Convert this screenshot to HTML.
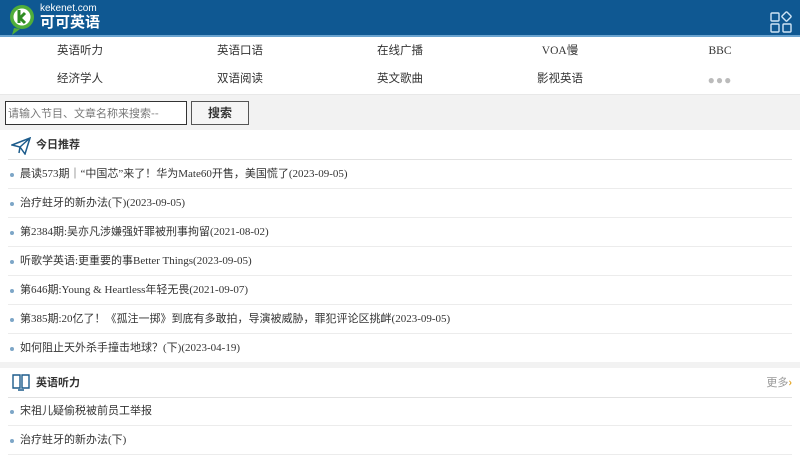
<!DOCTYPE html>
<html><head><meta charset="utf-8"><style>
*{margin:0;padding:0;box-sizing:border-box}
body{width:800px;height:450px;overflow:hidden;background:#fff;font-family:"Liberation Serif","Noto Sans CJK SC",serif;font-size:12px;color:#333}
.hd{height:37px;background:#0f5892;border-bottom:2px solid #6aa3cf;position:relative}
.nav{height:57px;position:relative}
.nav div{position:absolute;width:160px;text-align:center;font-size:11.5px;color:#333;line-height:16px;height:16px}
.sb{height:36px;background:#f2f2f2;position:relative;border-top:1px solid #e8e8e8}
.inp{position:absolute;left:5px;top:6px;width:182px;height:24px;border:1px solid #333;background:#fff;font-family:"Noto Sans CJK SC",sans-serif;font-size:11px;color:#777;padding:4px 2px;line-height:14px}
.btn{position:absolute;left:191px;top:6px;width:58px;height:24px;border:1px solid #555;background:#f5f5f5;text-align:center;font-family:"Noto Sans CJK SC",sans-serif;font-weight:bold;font-size:12px;line-height:21px}
.sec{position:absolute;left:0;width:800px;background:#fff}
.st{position:absolute;left:8px;right:8px;height:30px;border-bottom:1px solid #e2e2e2}
.st b{position:absolute;left:28px;top:6px;font-family:"Noto Sans CJK SC",sans-serif;font-size:11px}
.it{position:absolute;left:8px;right:8px;height:29px;border-bottom:1px solid #ececec;font-size:11px;line-height:29px;padding-left:12px;font-family:"Liberation Serif","Noto Sans CJK SC",serif}
.it:before{content:"";position:absolute;left:2px;top:13px;width:4px;height:4px;border-radius:2px;background:#7da6c7}
</style></head><body>
<div class="hd">
<svg width="30" height="32" style="position:absolute;left:8px;top:4px" viewBox="0 0 30 32"><circle cx="14" cy="13" r="12" fill="#4fae3a"/><path d="M6 24 L4 31 L12 25Z" fill="#4fae3a"/><circle cx="14" cy="13" r="8.5" fill="#fff"/><path d="M11 6v13M17 9l-5 5 5 5" stroke="#2e8c22" stroke-width="3" fill="none"/></svg>
<div style="position:absolute;left:40px;top:3px;color:#fff;font-family:'Liberation Sans',sans-serif;font-size:10px;line-height:11px">kekenet.com</div>
<div style="position:absolute;left:40px;top:13px;color:#fff;font-family:'Noto Sans CJK SC',sans-serif;font-weight:bold;font-size:15px;line-height:18px">可可英语</div>
<svg width="24" height="22" style="position:absolute;left:770px;top:11px" viewBox="0 0 24 22" fill="none" stroke="#cfe4f5" stroke-width="1.4"><rect x="1" y="2" width="8" height="8" rx="1"/><rect x="13" y="2" width="7" height="7" rx="1" transform="rotate(45 16.5 5.5)"/><rect x="1" y="13" width="8" height="8" rx="1"/><rect x="13" y="13" width="8" height="8" rx="1"/></svg>
</div>
<div class="nav">
<div style="left:0;top:6px">英语听力</div><div style="left:160px;top:6px">英语口语</div><div style="left:320px;top:6px">在线广播</div><div style="left:480px;top:6px">VOA慢</div><div style="left:640px;top:6px">BBC</div>
<div style="left:0;top:34px">经济学人</div><div style="left:160px;top:34px">双语阅读</div><div style="left:320px;top:34px">英文歌曲</div><div style="left:480px;top:34px">影视英语</div><div style="left:640px;top:35px;color:#bbb;font-size:12px;letter-spacing:1px">●●●</div>
</div>
<div class="sb"><div class="inp">请输入节目、文章名称来搜索--</div><div class="btn">搜索</div></div>
<div class="sec" style="top:130px;height:232px">
<div class="st" style="top:0">
<svg width="20" height="18" style="position:absolute;left:3px;top:7px" viewBox="0 0 20 18" fill="none" stroke="#1d5c8c" stroke-width="1.5"><path d="M1 8 L19 1 L14 17 L9 10 Z M9 10 L19 1 M9 10 L8 16"/></svg>
<b>今日推荐</b></div>
<div class="it" style="top:30px">晨读573期｜“中国芯”来了！华为Mate60开售，美国慌了(2023-09-05)</div>
<div class="it" style="top:59px">治疗蛀牙的新办法(下)(2023-09-05)</div>
<div class="it" style="top:88px">第2384期:吴亦凡涉嫌强奸罪被刑事拘留(2021-08-02)</div>
<div class="it" style="top:117px">听歌学英语:更重要的事Better Things(2023-09-05)</div>
<div class="it" style="top:146px">第646期:Young &amp; Heartless年轻无畏(2021-09-07)</div>
<div class="it" style="top:175px">第385期:20亿了！《孤注一掷》到底有多敢拍，导演被威胁，罪犯评论区挑衅(2023-09-05)</div>
<div class="it" style="top:204px;border:none">如何阻止天外杀手撞击地球？(下)(2023-04-19)</div>
</div>
<div style="position:absolute;top:362px;left:0;width:800px;height:8px;background:#f2f2f2"></div>
<div class="sec" style="top:368px;height:82px">
<div class="st" style="top:0">
<svg width="18" height="18" style="position:absolute;left:4px;top:5px" viewBox="0 0 18 18" fill="none" stroke="#1d5c8c" stroke-width="1.4"><path d="M1 2h7v13H1zM10 2h7v13h-7zM6 17h6"/></svg>
<b>英语听力</b><span style="position:absolute;right:0;top:6px;color:#999;font-size:11px;font-family:'Noto Sans CJK SC',sans-serif">更多<span style="color:#e3a11a;font-weight:bold">›</span></span></div>
<div class="it" style="top:29px">宋祖儿疑偷税被前员工举报</div>
<div class="it" style="top:58px">治疗蛀牙的新办法(下)</div>
</div>
</body></html>
